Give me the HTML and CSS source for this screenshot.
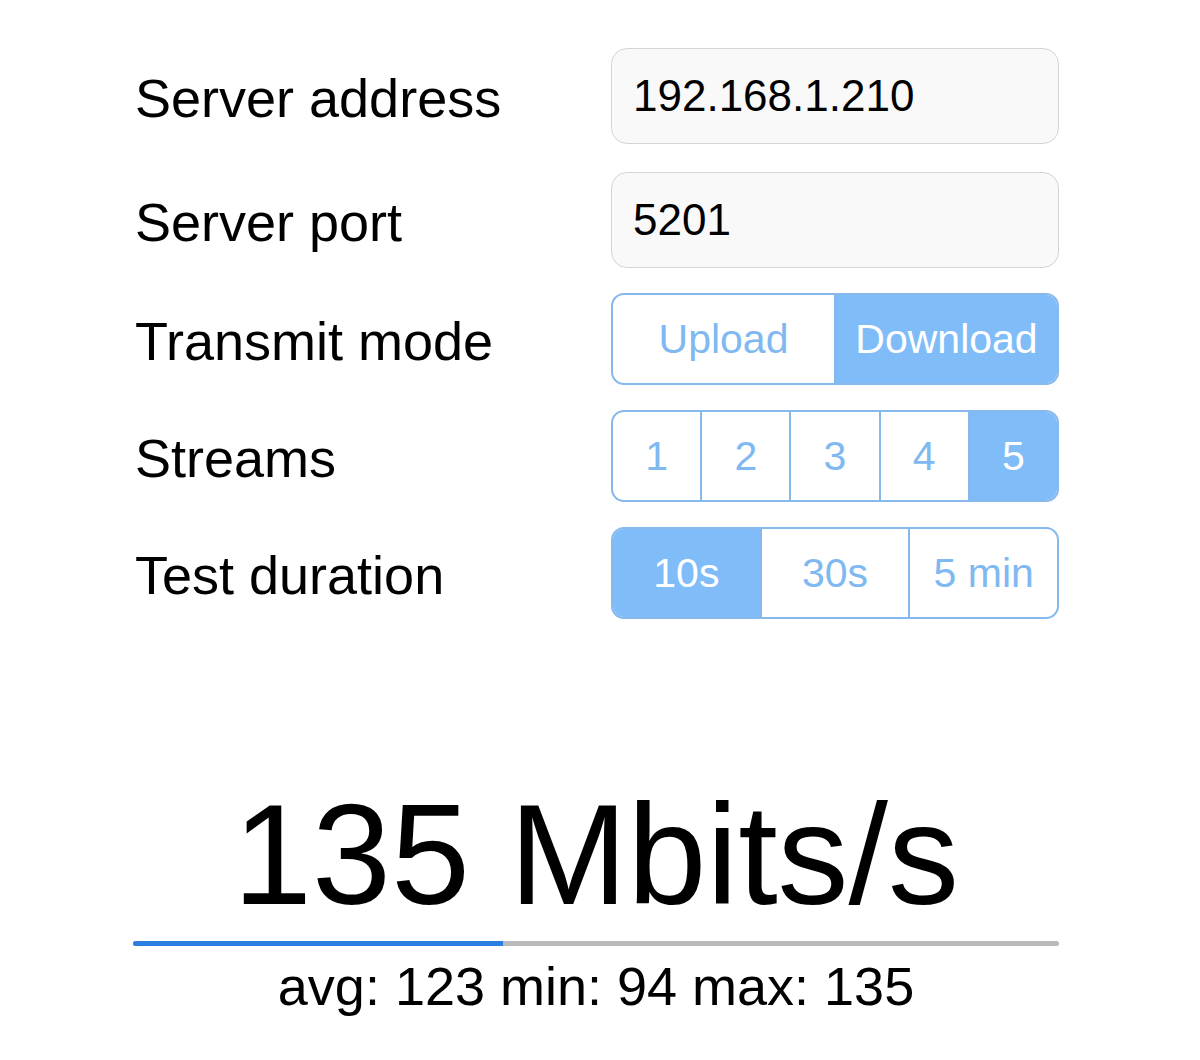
FILE: index.html
```html
<!DOCTYPE html>
<html>
<head>
  <title>iPerf Client</title>
  <meta name='viewport' content='width=device-width, initial-scale=1'>
  <link rel="stylesheet" href="styles.css">
</head>
<body>
  <div class='container'>
    <div class='settings'>
      <div class='row'>
        <div class='label'>Server address</div>
        <input class='field' type='text' value='192.168.1.210'>
      </div>
      <div class='row'>
        <div class='label'>Server port</div>
        <input class='field' type='text' value='5201'>
      </div>
      <div class='row'>
        <div class='label'>Transmit mode</div>
        <div class='segmented'>
          <div class='seg'>Upload</div>
          <div class='seg selected'>Download</div>
        </div>
      </div>
      <div class='row'>
        <div class='label'>Streams</div>
        <div class='segmented'>
          <div class='seg'>1</div>
          <div class='seg'>2</div>
          <div class='seg'>3</div>
          <div class='seg'>4</div>
          <div class='seg selected'>5</div>
        </div>
      </div>
      <div class='row'>
        <div class='label'>Test duration</div>
        <div class='segmented'>
          <div class='seg selected'>10s</div>
          <div class='seg'>30s</div>
          <div class='seg'>5 min</div>
        </div>
      </div>
    </div>

    <div class='result'>
      <div class='speed'>135 Mbits/s</div>
      <div class='progress'>
        <div class='progress-fill' style='width: 40%'></div>
      </div>
      <div class='stats'>avg: 123 min: 94 max: 135</div>
    </div>
  </div>
</body>
</html>
```

FILE: styles.css
```css
body {
  margin: 0;
  background-color: #fff;
  color: #000;
  font-family: "Liberation Sans", Arial, sans-serif;
}
.container {
  width: 926px;
  margin-left: 133px;
  padding-top: 48px;
}
.settings {
  padding-left: 2px;
}
.row {
  display: flex;
  align-items: center;
  justify-content: space-between;
  margin-bottom: 25px;
}
.row:first-child {
  margin-bottom: 28px;
}
.label {
  font-size: 54px;
  padding-top: 4px;
}
.field {
  box-sizing: border-box;
  width: 448px;
  height: 96px;
  padding: 0 0 0 21px;
  border: 1px solid #d4d4d4;
  border-radius: 16px;
  background-color: #f9f9f9;
  font-family: "Liberation Sans", Arial, sans-serif;
  font-size: 44px;
  color: #000;
  outline: none;
}
.segmented {
  box-sizing: border-box;
  display: flex;
  width: 448px;
  height: 92px;
  border: 2px solid #86b8ec;
  border-radius: 13px;
  overflow: hidden;
}
.seg {
  flex: 1;
  display: flex;
  align-items: center;
  justify-content: center;
  font-size: 41px;
  color: #80b9f1;
  border-left: 2px solid #86b8ec;
}
.seg:first-child {
  border-left: none;
}
.seg.selected {
  background-color: #80bdf8;
  color: #fff;
}
.result {
  margin-top: 165px;
  text-align: center;
}
.speed {
  font-size: 142px;
  line-height: 142px;
}
.progress {
  height: 5px;
  margin-top: 15px;
  background-color: #b9b9b9;
  border-radius: 3px;
  overflow: hidden;
}
.progress-fill {
  height: 100%;
  background-color: #2a7de1;
}
.stats {
  margin-top: 9px;
  font-size: 54px;
}
```
